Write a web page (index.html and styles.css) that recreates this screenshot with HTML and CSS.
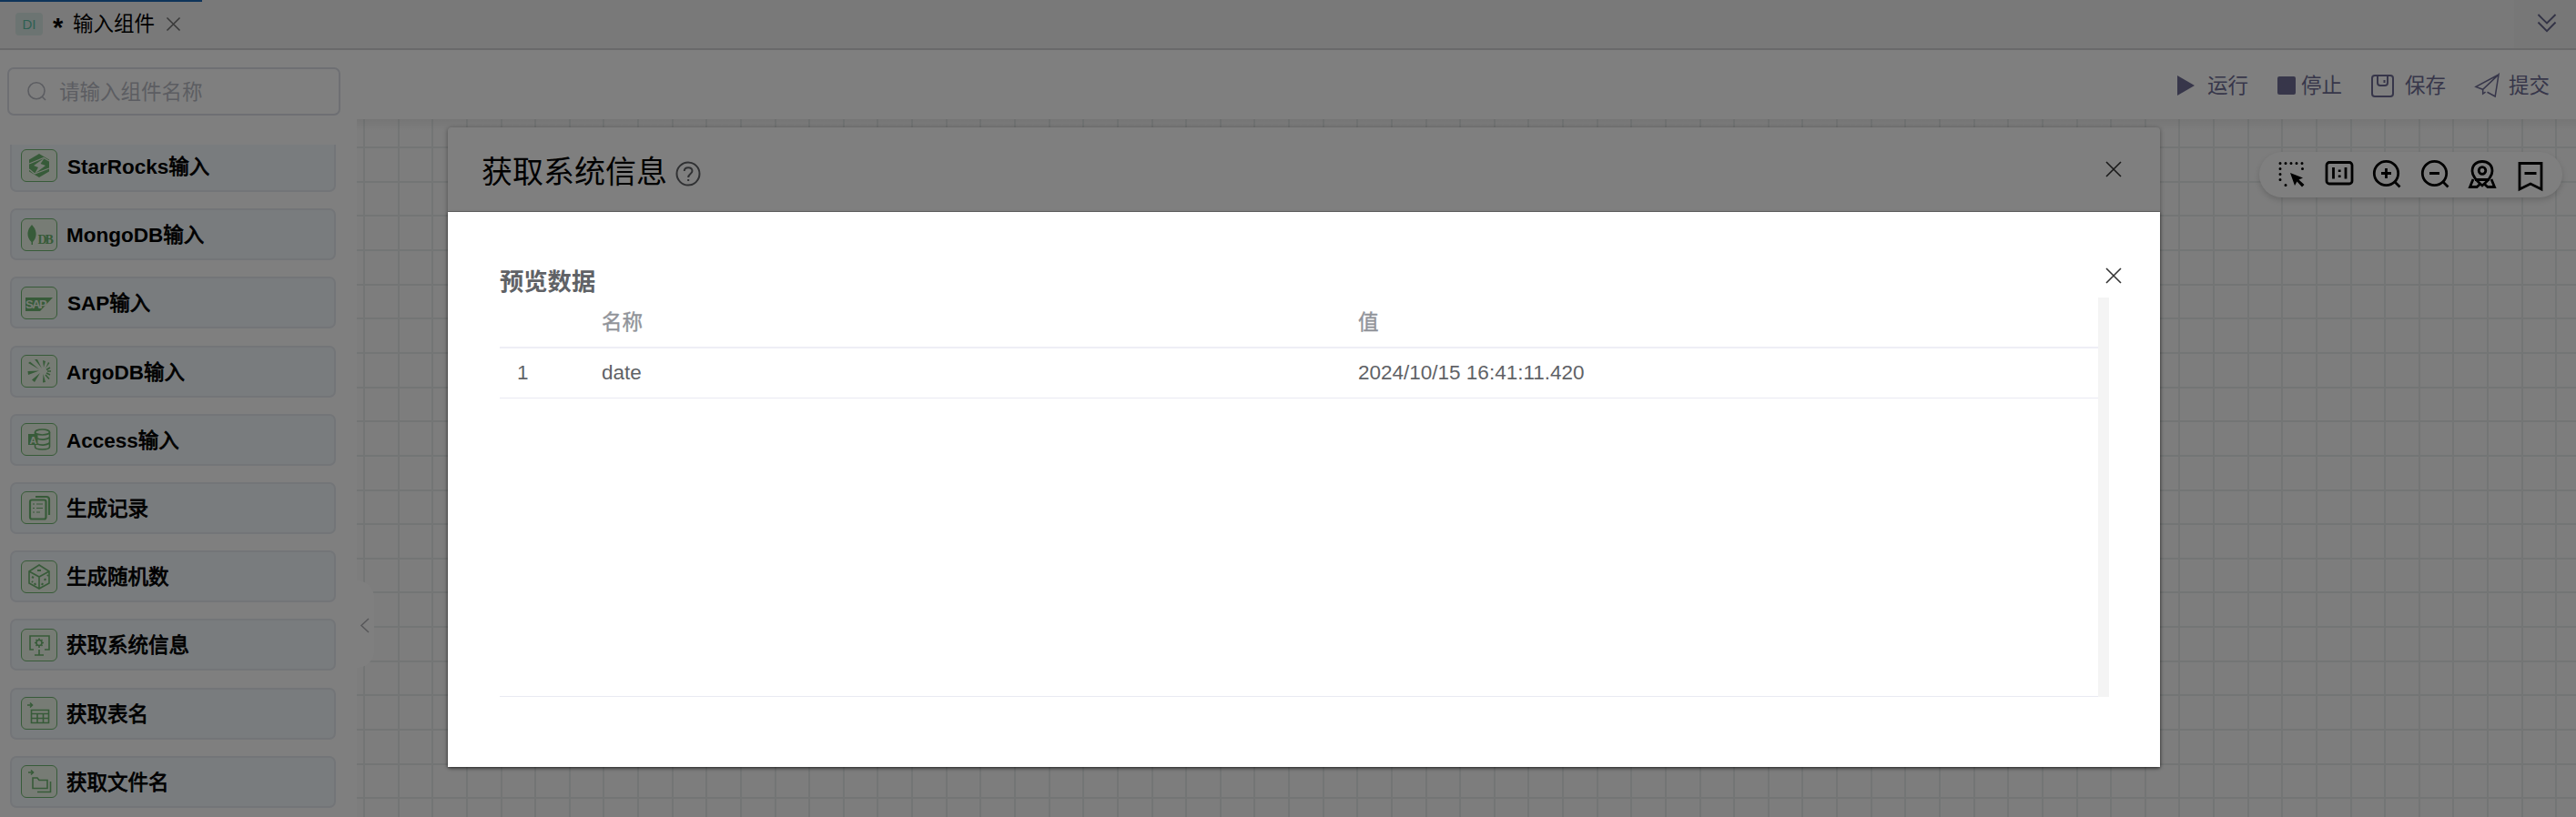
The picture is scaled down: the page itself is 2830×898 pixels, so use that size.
FILE: index.html
```
<!DOCTYPE html>
<html lang="zh-CN">
<head>
    <meta charset="UTF-8">
    <meta name="viewport" content="width=device-width, initial-scale=1.0">
    <title>输入组件</title>
    <link rel="stylesheet" href="styles.css">
</head>
<body>
    <div class="app">
        <header class="tabs">
            <div class="tab">
                <span class="tab-tag">DI</span>
                <span class="tab-star">*</span>
                <span class="tab-name">输入组件</span>
                <svg class="tab-close" viewBox="0 0 16 16"><path d="M0.5 0.5L15.5 15.5M15.5 0.5L0.5 15.5"/></svg>
            </div>
            <div class="tabs-more">
                <svg viewBox="0 0 22 22"><path d="M1 1L11 11L21 1M1 10L11 20L21 10"/></svg>
            </div>
        </header>

        <div class="workspace">
            <aside class="sidebar">
                <div class="search">
                    <svg viewBox="0 0 21 21"><circle cx="10" cy="9.7" r="9"/><path d="M16 16L20 20"/></svg>
                    <span>请输入组件名称</span>
                </div>
                <ul class="component-list">
                    <li class="component">
                        <svg class="component-icon" viewBox="0 0 40 36"><path class="solid" d="M20 5L31 11.500V24.500L20 31L9 24.500V11.500Z"/><path class="cut" d="M26 9.500L14 18L19 20L15 27L27 18L21.500 16Z"/><path class="cut-line" d="M9 16L25 9.500L31 13M31 21L15 27L9 22"/></svg>
                        <span class="component-name latin"><b>StarRocks</b>输入</span>
                    </li>
                    <li class="component">
                        <svg class="component-icon" viewBox="0 0 40 36"><path class="solid" d="M12 7C18 13 18 21 13 26V29H11.500V26C6 21 6 13 12 7Z"/><text class="icon-serif" x="18.500" y="28">DB</text></svg>
                        <span class="component-name"><b>MongoDB</b>输入</span>
                    </li>
                    <li class="component">
                        <svg class="component-icon" viewBox="0 0 40 36"><path class="solid" d="M5 12H35L21 27H5Z"/><text class="icon-sap" x="5" y="24">SAP</text></svg>
                        <span class="component-name latin"><b>SAP</b>输入</span>
                    </li>
                    <li class="component">
                        <svg class="component-icon" viewBox="0 0 40 36"><path class="solid" d="M15 5L18 5L23 15ZM8 9L10 7.500L20 16ZM7.500 18L20 17.500L8 22ZM12 27.500L21 20L15 30ZM24 30.500L24.500 21L27 30ZM24 6L25 14L27 7ZM31.500 9L27 15L30 8Z"/><path d="M28 16.500L32 14M29 18H33M28 20L32 22M27 22L31 26.500"/></svg>
                        <span class="component-name"><b>ArgoDB</b>输入</span>
                    </li>
                    <li class="component">
                        <svg class="component-icon" viewBox="0 0 40 36"><ellipse cx="23.500" cy="10" rx="8" ry="3"/><path d="M15.500 10V13M31.500 10V26C31.500 30 15.500 30 15.500 26V24M18 17C22 19 31 18 31.500 15M18 23C22 25 31 24 31.500 21"/><path class="solid" d="M8 12H18.500V24H8Z"/><text class="icon-a" x="9.500" y="22.500">A</text></svg>
                        <span class="component-name"><b>Access</b>输入</span>
                    </li>
                    <li class="component">
                        <svg class="component-icon thick" viewBox="0 0 40 36"><rect x="10" y="9.500" width="17.500" height="21" rx="2"/><path d="M16 6H28C30 6 31 7 31 9V26"/><path class="fine" d="M13 14H15M17 14H24M13 18.500H15M17 18.500H24M13 23H15M17 23H21"/></svg>
                        <span class="component-name">生成记录</span>
                    </li>
                    <li class="component">
                        <svg class="component-icon" viewBox="0 0 40 36"><path d="M20 5L31 12V25L20 31L9 25V12ZM9 12L20 18L31 12M20 18V31"/><path class="thick" d="M18 11H22M12 18L14 19M15 25L16 27M23 27L24 25M26 22L27 20M29 17L30 16M12 23L13 24"/></svg>
                        <span class="component-name">生成随机数</span>
                    </li>
                    <li class="component">
                        <svg class="component-icon" viewBox="0 0 40 36"><path d="M14 23H10V8H31V23H26M20 23V29M15 29H25"/><circle cx="20" cy="15.500" r="3"/><path d="M20 10.500V12M20 19V21M15 15.500H17M23 15.500H25M16.500 12L17.500 13M22.500 18L23.500 19M23.500 12L22.500 13M17.500 18L16.500 19"/></svg>
                        <span class="component-name">获取系统信息</span>
                    </li>
                    <li class="component">
                        <svg class="component-icon" viewBox="0 0 40 36"><path d="M7 9H12M10 6.500L12.500 9L10 11.500M11.500 14.500H30.500V28.500H11.500ZM11.500 18.500H30.500M11.500 23.500H30.500M18 18.500V28.500M24.500 18.500V28.500"/></svg>
                        <span class="component-name">获取表名</span>
                    </li>
                    <li class="component">
                        <svg class="component-icon" viewBox="0 0 40 36"><path d="M8 8H13M11 5.500L13.500 8L11 10.500M13 14H18L20 16.500H29V25.500H13ZM18 29.500H32.500V18"/></svg>
                        <span class="component-name">获取文件名</span>
                    </li>
                </ul>
            </aside>

            <main class="main">
                <div class="toolbar">
                    <div class="action run"><svg viewBox="0 0 19 22"><path class="fill" d="M0 0L19 11L0 22Z"/></svg><span>运行</span></div>
                    <div class="action stop"><svg viewBox="0 0 20 20"><rect class="fill" width="20" height="20" rx="2"/></svg><span>停止</span></div>
                    <div class="action save"><svg viewBox="0 0 25 25"><rect x="1" y="1" width="23" height="23" rx="3"/><path d="M7 1V9C7 11 8 12 10 12H15C17 12 18 11 18 9V1M14.500 6V9"/></svg><span>保存</span></div>
                    <div class="action submit"><svg viewBox="0 0 28 27"><path d="M27 1L1 15L9 18L27 1L23 26L14 21M9 18V23L12 21"/></svg><span>提交</span></div>
                </div>
                <div class="canvas">
                    <div class="collapse"><svg viewBox="0 0 10 17"><path d="M9 1L1 8.500L9 16"/></svg></div>
                    <div class="canvas-tools">
                        <svg viewBox="0 0 32 32"><path class="dots" d="M4 4.500H28.500M4 10.500V28.500M28.500 10.500V11M10 28.500H11"/><path class="black" d="M15 15L29 20.500L24.500 22.500L30.500 28L28 30.500L22.500 24.500L20 29Z"/></svg>
                        <svg viewBox="0 0 32 32"><rect x="2" y="3.500" width="28" height="23.500" rx="3"/><path d="M9.500 9V21.500M23 9V21.500M16.200 11.500V14M16.200 17.500V20"/></svg>
                        <svg viewBox="0 0 32 32"><circle cx="15.500" cy="15.500" r="13.200"/><path d="M25 25L30.500 30.500M10 15.500H21M15.500 10V21"/></svg>
                        <svg viewBox="0 0 32 32"><circle cx="15.500" cy="15.500" r="13.200"/><path d="M25 25L30.500 30.500M10 15.500H21"/></svg>
                        <svg viewBox="0 0 32 32"><path d="M16 29C10 24 5 19 5 13C5 6 10 2.500 16 2.500S27 6 27 13C27 19 22 24 16 29Z"/><circle cx="16" cy="12.500" r="3.800"/><path d="M6 22L2.500 30.500H10L14 27M26 22L29.500 30.500H22L18 27M8 22.500H24"/></svg>
                        <svg viewBox="0 0 32 32"><path d="M4 4.500H28V33L16 27L4 33ZM9.500 15.500H22.500"/></svg>
                    </div>
                </div>
            </main>
        </div>
    </div>

    <section class="dialog">
        <div class="dialog-header">
            <h2 class="dialog-title">获取系统信息</h2>
            <svg class="help" viewBox="0 0 28 28"><circle cx="14" cy="14" r="12.500"/><path d="M9.800 11C9.800 6 18.500 6 18.500 11C18.500 14 14.200 14 14.200 18M14.200 20V22"/></svg>
            <svg class="close" viewBox="0 0 18 18"><path d="M1 1L17 17M17 1L1 17"/></svg>
        </div>
    </section>

    <div class="overlay"></div>

    <section class="preview">
        <div class="preview-header">
            <h3 class="preview-title">预览数据</h3>
            <svg class="close" viewBox="0 0 18 18"><path d="M1 1L17 17M17 1L1 17"/></svg>
        </div>
        <div class="table">
            <div class="table-body">
                <div class="row head"><span></span><span>名称</span><span>值</span></div>
                <div class="row"><span class="index">1</span><span>date</span><span>2024/10/15 16:41:11.420</span></div>
            </div>
            <div class="scrollbar"></div>
        </div>
    </section>
</body>
</html>
```
FILE: styles.css
```
* {
    margin: 0;
    padding: 0;
    box-sizing: border-box;
}

body {
    width: 2830px;
    height: 898px;
    overflow: hidden;
    position: relative;
    background-color: #fff;
    font-family: "Liberation Sans", "Noto Sans CJK SC", sans-serif;
    font-size: 22.5px;
    line-height: 30px;
    color: #606266;
}

svg {
    display: block;
    flex: none;
    fill: none;
    stroke: currentColor;
    stroke-width: 1.6;
    overflow: visible;
}

ul {
    list-style: none;
}

.app {
    height: 898px;
    display: flex;
    flex-direction: column;
}

/* tabs */
.tabs {
    flex: none;
    height: 55px;
    display: flex;
    justify-content: space-between;
    background-color: #f2f2f2;
    border-bottom: 2px solid #d2d2d4;
}

.tab {
    width: 222px;
    display: flex;
    align-items: center;
    padding: 0 0 2px 17px;
    border-top: 2px solid #1c68b4;
    color: #000;
}

.tab-tag {
    width: 30px;
    height: 25px;
    border-radius: 4px;
    background-color: #d8e8e4;
    color: #5cc0a4;
    font-size: 15px;
    line-height: 26px;
    text-align: center;
}

.tab-star {
    width: 12px;
    margin: 6px 10px 0 11px;
    font-size: 29px;
    font-weight: 700;
}

.tab-close {
    width: 15px;
    height: 15px;
    margin-left: 13px;
    color: #707070;
}

.tabs-more {
    width: 68px;
    padding: 15px 0 0 25px;
    background-color: #eee;
    color: #66668c;
}

.tabs-more svg {
    width: 22px;
    height: 21px;
    stroke-width: 2;
}

.workspace {
    flex: 1;
    min-height: 0;
    display: flex;
}

/* component list */
.sidebar {
    width: 392px;
    flex: none;
    display: flex;
    flex-direction: column;
    padding: 19px 0 0 8px;
}

.search {
    flex: none;
    width: 366px;
    height: 53px;
    display: flex;
    align-items: center;
    gap: 14px;
    padding-left: 20px;
    border: 2px solid #dcdfe6;
    border-radius: 7px;
    color: #b9bbc4;
}

.search svg {
    width: 21px;
    height: 21px;
}

.search span {
    padding-top: 2px;
}

.component-list {
    flex: 1;
    min-height: 0;
    display: flex;
    flex-direction: column;
    gap: 18.2px;
    margin-top: 32px;
    padding-left: 3px;
    overflow: hidden;
}

.component {
    flex: none;
    width: 358px;
    height: 57px;
    display: flex;
    align-items: center;
    gap: 10px;
    padding-left: 10px;
    border: 2px solid #e6eaf0;
    border-radius: 7px;
    background-color: #f3f9fc;
}

.component:first-child {
    height: 52px;
    padding-bottom: 4px;
    border-top: none;
    border-radius: 0 0 7px 7px;
}

.component-icon {
    width: 40px;
    height: 36px;
    border-radius: 6px;
    background-color: #eff9ea;
    color: #6fb672;
    outline: 1.5px solid #6fb672;
    outline-offset: -1px;
}

.component-icon .solid {
    fill: currentColor;
    stroke: none;
}

.component-icon .cut {
    fill: #eff9ea;
    stroke: none;
}

.component-icon .cut-line {
    stroke: #eff9ea;
    stroke-width: 1.2;
}

.component-icon text {
    stroke: none;
    fill: currentColor;
}

.component-icon.thick,
.component-icon .thick {
    stroke-width: 2.2;
}

.component-icon .fine {
    stroke-width: 1.2;
}

.icon-serif {
    font: bold 14px "Liberation Serif", serif;
    letter-spacing: -2px;
}

.component-icon .icon-sap {
    font: bold 13px "Liberation Sans", sans-serif;
    letter-spacing: -1.500px;
    fill: #eff9ea;
}

.component-icon .icon-a {
    font: bold 11px "Liberation Sans", sans-serif;
    fill: #eff9ea;
}

.component-name {
    padding-top: 3px;
    color: #000;
    -webkit-text-stroke: 0.8px #000;
}

.component-name b {
    -webkit-text-stroke: 0;
}

.component-name.latin {
    padding-left: 1px;
}

/* top actions */
.main {
    flex: 1;
    display: flex;
    flex-direction: column;
}

.toolbar {
    flex: none;
    height: 76px;
    display: flex;
    justify-content: flex-end;
    align-items: center;
    gap: 32px;
    padding: 2px 29px 0 0;
    color: #6e6d94;
}

.action {
    display: flex;
    align-items: center;
}

.action span {
    padding-top: 2px;
}

.action .fill {
    fill: currentColor;
    stroke: none;
}

.run svg {
    width: 19px;
    height: 22px;
    margin-right: 14px;
}

.stop svg {
    width: 20px;
    height: 20px;
    margin-right: 6px;
}

.save svg {
    width: 25px;
    height: 25px;
    margin-right: 12px;
    stroke-width: 2;
}

.submit svg {
    width: 27px;
    height: 26px;
    margin-right: 10px;
}

/* canvas */
.canvas {
    flex: 1;
    position: relative;
    background-color: #fafafa;
    background-image:
        linear-gradient(rgba(0, 0, 0, 0.06), transparent 12px),
        repeating-linear-gradient(90deg, #e7ebeb 0 2px, transparent 2px 37.63px),
        repeating-linear-gradient(#e7ebeb 0 2px, transparent 2px 37.63px);
    background-position: 0 0, -30.6px 0, 0 -7.4px;
    background-size: auto, 2500px 100%, 100% 900px;
}

.collapse {
    position: absolute;
    left: 0;
    top: 507px;
    width: 19px;
    height: 96px;
    padding: 41px 0 0 4px;
    background-color: #fff;
    border-radius: 0 19px 19px 0;
    color: #b0b0b4;
}

.collapse svg {
    width: 10px;
    height: 17px;
}

.canvas-tools {
    position: absolute;
    right: 15px;
    top: 36px;
    width: 333px;
    height: 50px;
    display: flex;
    align-items: center;
    gap: 20.6px;
    padding: 0 0 3px 19px;
    border-radius: 25px;
    background-color: #fff;
    box-shadow: 0 3px 6px rgba(0, 0, 0, 0.16);
    color: #000;
}

.canvas-tools svg {
    width: 32px;
    height: 32px;
    stroke-width: 2.8;
}

.canvas-tools .dots {
    stroke-dasharray: 0 6;
    stroke-linecap: round;
    stroke-width: 3;
}

.canvas-tools .black {
    fill: #000;
    stroke: none;
}

/* dialogs */
.dialog {
    position: absolute;
    left: 492px;
    top: 140px;
    width: 1881px;
    height: 703px;
    background-color: #fff;
    border-radius: 4px;
    box-shadow: 0 1px 5px rgba(0, 0, 0, 0.4);
}

.dialog-header {
    height: 94px;
    display: flex;
    align-items: center;
    padding: 0 42px 0 37px;
    border-bottom: 2px solid #ccc;
}

.dialog-title {
    padding-top: 5px;
    color: #000;
    font-size: 34px;
    font-weight: 400;
    line-height: 50px;
}

.help {
    width: 28px;
    height: 28px;
    margin: 9px 0 0 9px;
    stroke-width: 2;
}

.close {
    width: 18px;
    height: 18px;
    margin-left: auto;
    color: #333;
}

.overlay {
    position: absolute;
    inset: 0;
    background-color: rgba(0, 0, 0, 0.5);
}

.preview {
    position: absolute;
    left: 492px;
    top: 233px;
    width: 1881px;
    height: 610px;
    padding: 54px 56px 0 57px;
    background-color: #fff;
    box-shadow: 0 1px 3px rgba(0, 0, 0, 0.5);
}

.preview-header {
    height: 40px;
    display: flex;
    align-items: flex-start;
    justify-content: space-between;
}

.preview-header .close {
    margin: 7px -14px 0 0;
}

.preview-title {
    font-size: 26.3px;
    font-weight: 700;
    line-height: 47px;
}

.table {
    height: 439px;
    display: flex;
}

.table-body {
    flex: 1;
    border-bottom: 1px solid #e9eaf2;
}

.row {
    height: 55px;
    display: grid;
    grid-template-columns: 112px 831px 1fr;
    align-items: center;
    padding-bottom: 1px;
    border-bottom: 1px solid #e9eaf2;
}

.row.head {
    height: 56px;
    padding: 2px 0 0;
    border-bottom: 2px solid #eeeef5;
    color: #909399;
    -webkit-text-stroke: 0.4px #909399;
}

.index {
    padding-left: 19px;
}

.scrollbar {
    width: 12px;
    background-color: #f4f4f4;
}
```
